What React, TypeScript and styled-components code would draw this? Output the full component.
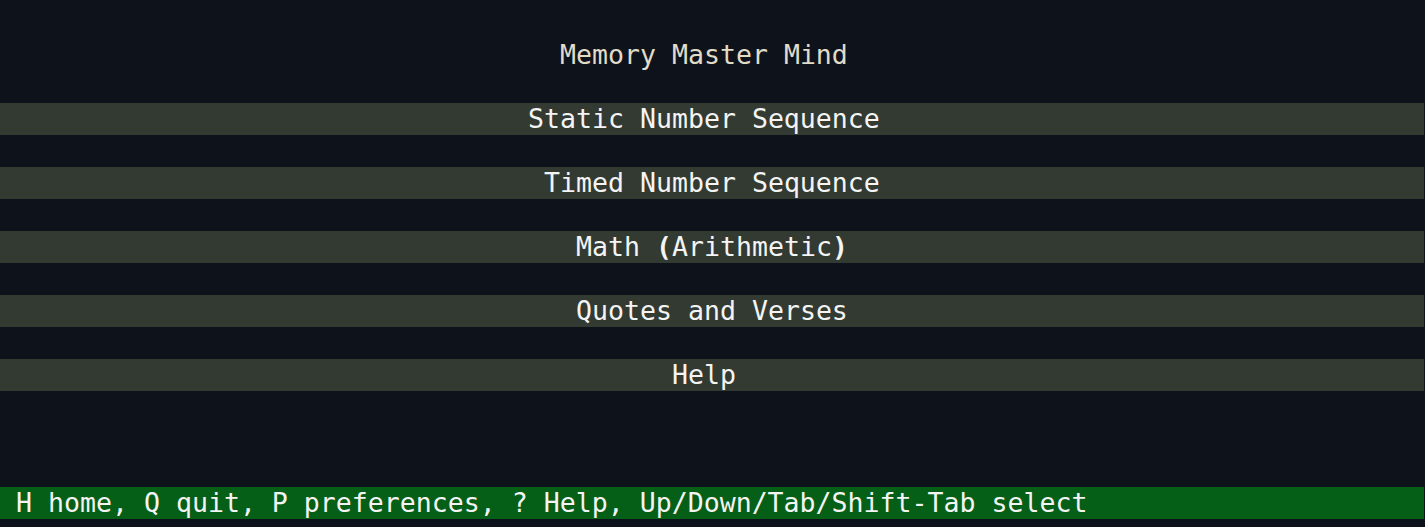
import React from "react";
import styled, { createGlobalStyle } from "styled-components";

const COLS = 89;
const CELL_W = 16;
const CELL_H = 32;

const Global = createGlobalStyle`
  html, body {
    margin: 0;
    padding: 0;
    background: #0e121a;
  }
  #root {
    background: #0e121a;
  }
`;

const Screen = styled.div`
  width: 1425px;
  height: 527px;
  box-sizing: border-box;
  padding: 7px 0 8px 0;
  display: flex;
  flex-direction: column;
  background: #0e121a;
  font-family: "DejaVu Sans Mono", "Liberation Mono", monospace;
  font-size: 26.57px;
  overflow: hidden;
`;

const Row = styled.div<{ $indent: number }>`
  width: ${COLS * CELL_W}px;
  height: ${CELL_H}px;
  line-height: ${CELL_H}px;
  box-sizing: border-box;
  padding-left: ${(p) => p.$indent * CELL_W}px;
  white-space: pre;
  flex: none;
`;

const Title = styled(Row)`
  color: #e0dcc8;
  margin-top: ${CELL_H}px;
`;

const MenuItem = styled(Row)`
  color: #f4f4f4;
  background: #323a32;
  margin-top: ${CELL_H}px;
`;

const Strong = styled.span`
  font-weight: bold;
`;

const Footer = styled(Row)`
  margin-top: auto;
  color: #f4f4f4;
  background: #055f16;
`;

const center = (len: number) => Math.floor((COLS - len) / 2);

const items: { text: string; node?: React.ReactNode }[] = [
  { text: "Static Number Sequence" },
  { text: "Timed Number Sequence" },
  {
    text: "Math (Arithmetic)",
    node: (
      <>
        Math <Strong>(</Strong>Arithmetic<Strong>)</Strong>
      </>
    ),
  },
  { text: "Quotes and Verses" },
  { text: "Help" },
];

export default function App() {
  const title = "Memory Master Mind";
  return (
    <>
      <Global />
      <Screen>
        <Title $indent={center(title.length)}>{title}</Title>
        {items.map((it) => (
          <MenuItem key={it.text} $indent={center(it.text.length)}>
            {it.node ?? it.text}
          </MenuItem>
        ))}
        <Footer $indent={1}>
          H home, Q quit, P preferences, ? Help, Up/Down/Tab/Shift-Tab select
        </Footer>
      </Screen>
    </>
  );
}
